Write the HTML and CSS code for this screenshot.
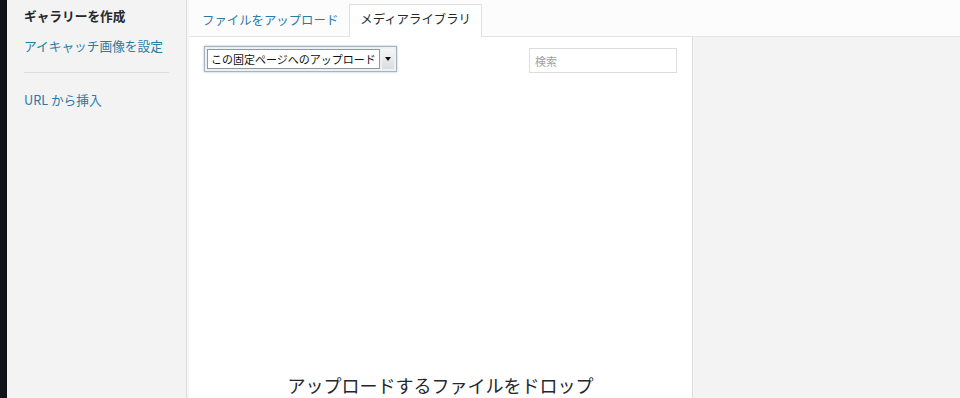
FILE: index.html
```html
<!DOCTYPE html>
<html lang="ja">
<head>
    <meta charset="UTF-8">
    <meta name="viewport" content="width=device-width, initial-scale=1.0">
    <title>メディアを追加</title>
    <link rel="stylesheet" href="styles.css">
</head>
<body>
    <div class="edge"></div>

    <div class="menu">
        <div class="menu-title">ギャラリーを作成</div>
        <a class="menu-link" href="#">アイキャッチ画像を設定</a>
        <div class="separator"></div>
        <a class="menu-link" href="#">URL から挿入</a>
    </div>

    <div class="frame">
        <div class="tabs">
            <a class="tab" href="#">ファイルをアップロード</a>
            <a class="tab active" href="#">メディアライブラリ</a>
        </div>

        <div class="content">
            <div class="library">
                <div class="toolbar">
                    <div class="select">
                        <div class="select-value">この固定ページへのアップロード</div>
                        <div class="select-arrow"></div>
                    </div>
                    <input class="search" type="search" placeholder="検索">
                </div>
                <div class="drop">アップロードするファイルをドロップ</div>
            </div>
            <div class="details"></div>
        </div>
    </div>
</body>
</html>
```

FILE: styles.css
```css
body {
    font-family: "Noto Sans CJK JP", "Noto Sans", sans-serif;
    margin: 0;
    height: 398px;
    overflow: hidden;
    display: flex;
    background-color: #fff;
    color: #23282d;
}

.edge {
    width: 7px;
    background-color: #111419;
}

.menu {
    width: 162px;
    padding: 6px 0 0 17px;
    background-color: #f3f3f3;
    border-right: 1px solid #dcdcdc;
    display: flex;
    flex-direction: column;
}

.menu-title {
    font-size: 12.7px;
    font-weight: bold;
    line-height: 20px;
    margin-bottom: 10px;
}

.menu-link {
    font-size: 12.7px;
    line-height: 20px;
    color: #2a7aa6;
    text-decoration: none;
}

.separator {
    height: 1px;
    width: 145px;
    background-color: #dcdcdc;
    margin: 16px 0 17px;
}

.frame {
    flex: 1;
    display: flex;
    flex-direction: column;
    border-left: 2px solid #f6f6f6;
}

.tabs {
    height: 37px;
    box-sizing: border-box;
    padding-left: 2px;
    background-color: #fcfcfc;
    border-bottom: 1px solid #e4e4e4;
    display: flex;
    align-items: flex-end;
}

.tab {
    font-size: 12.4px;
    line-height: 20px;
    color: #2a7aa6;
    text-decoration: none;
    padding: 0 10px 7px;
    margin-bottom: -1px;
    border: 1px solid transparent;
    border-bottom: none;
}

.tab.active {
    color: #23282d;
    background-color: #fff;
    border-color: #e1e1e1;
    padding-top: 4px;
    padding-bottom: 8px;
}

.content {
    flex: 1;
    display: flex;
}

.library {
    width: 503px;
    background-color: #fff;
    border-right: 1px solid #dddddd;
    display: flex;
    flex-direction: column;
}

.toolbar {
    display: flex;
    justify-content: space-between;
    align-items: flex-start;
    padding: 9px 15px 0 15px;
}

.select {
    display: flex;
    height: 26px;
    box-sizing: border-box;
    border: 1px solid #a5b4bf;
    box-shadow: 0 0 2px rgba(60, 110, 150, 0.45);
    background-color: #eef1f3;
    padding: 2px;
}

.select-value {
    font-size: 11px;
    line-height: 18px;
    padding: 0 3px;
    background-color: #fff;
    border: 1px solid #8e9aa2;
    color: #111;
}

.select-arrow {
    width: 12px;
    margin-left: 2px;
    background: linear-gradient(#f7f7f7, #d9dde0);
    position: relative;
}

.select-arrow::after {
    content: "";
    position: absolute;
    left: 3px;
    top: 8px;
    border-left: 3px solid transparent;
    border-right: 3px solid transparent;
    border-top: 4px solid #111;
}

.search {
    width: 148px;
    height: 25px;
    box-sizing: border-box;
    margin-top: 2px;
    border: 1px solid #dddddd;
    padding: 0 5px;
    font-family: "Noto Sans CJK JP", "Noto Sans", sans-serif;
    font-size: 11px;
}

.search::placeholder {
    color: #a0a0a0;
}

.drop {
    margin-top: auto;
    text-align: center;
    font-size: 18px;
    line-height: 24px;
    color: #23282d;
    margin-bottom: 1px;
}

.details {
    flex: 1;
    background-color: #f3f3f3;
    border-left: 1px solid #f7f7f7;
}
```
